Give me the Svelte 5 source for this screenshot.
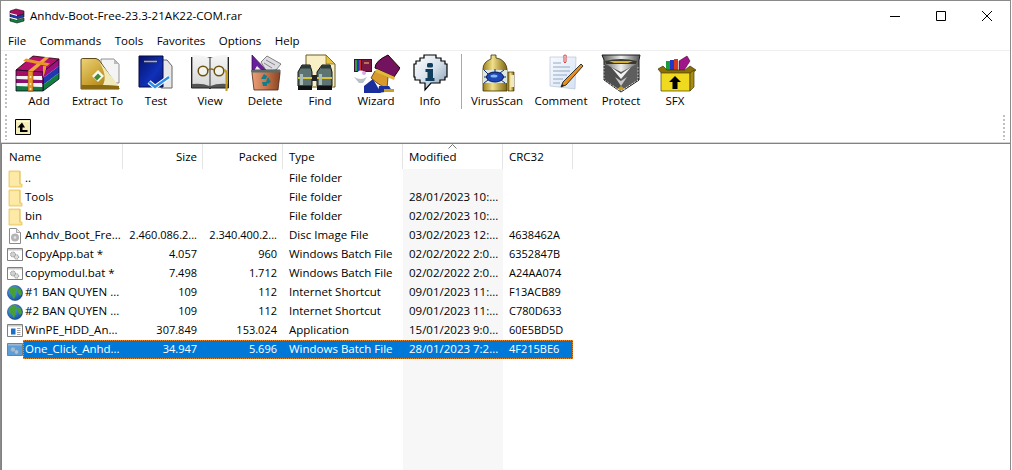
<script>
  const menus = ['File', 'Commands', 'Tools', 'Favorites', 'Options', 'Help'];

  const rows = [
    { icon: 'folder', name: '..', size: '', packed: '', type: 'File folder', modified: '', crc: '' },
    { icon: 'folder', name: 'Tools', size: '', packed: '', type: 'File folder', modified: '28/01/2023 10:...', crc: '' },
    { icon: 'folder', name: 'bin', size: '', packed: '', type: 'File folder', modified: '02/02/2023 10:...', crc: '' },
    { icon: 'disc', name: 'Anhdv_Boot_Fre...', size: '2.460.086.2...', packed: '2.340.400.2...', type: 'Disc Image File', modified: '03/02/2023 12:...', crc: '4638462A' },
    { icon: 'bat', name: 'CopyApp.bat *', size: '4.057', packed: '960', type: 'Windows Batch File', modified: '02/02/2022 2:0...', crc: '6352847B' },
    { icon: 'bat', name: 'copymodul.bat *', size: '7.498', packed: '1.712', type: 'Windows Batch File', modified: '02/02/2022 2:0...', crc: 'A24AA074' },
    { icon: 'globe', name: '#1 BAN QUYEN ...', size: '109', packed: '112', type: 'Internet Shortcut', modified: '09/01/2023 11:...', crc: 'F13ACB89' },
    { icon: 'globe', name: '#2 BAN QUYEN ...', size: '109', packed: '112', type: 'Internet Shortcut', modified: '09/01/2023 11:...', crc: 'C780D633' },
    { icon: 'app', name: 'WinPE_HDD_An...', size: '307.849', packed: '153.024', type: 'Application', modified: '15/01/2023 9:0...', crc: '60E5BD5D' },
    { icon: 'bat', name: 'One_Click_Anhd...', size: '34.947', packed: '5.696', type: 'Windows Batch File', modified: '28/01/2023 7:2...', crc: '4F215BE6', selected: true },
  ];
</script>

{#snippet rarIcon()}
  <svg class="tool-icon" viewBox="0 0 48 40">
    <path d="M1 17 18 3l26 3-16 13z" fill="#b3106f" stroke="#200" stroke-width=".8"/>
    <path d="M28 19 44 6v7L28 25z" fill="#a01080"/>
    <path d="M28 25 44 13v7L28 32z" fill="#2038b0"/>
    <path d="M28 32 44 20v6L28 38z" fill="#108040"/>
    <path d="M28 19 44 6v20L28 38z" fill="none" stroke="#102" stroke-width=".8"/>
    <path d="M1 17l27 2v6L1 23z" fill="#a60e66"/>
    <path d="M2 23h25v3H2z" fill="#f4f4f8"/>
    <path d="M1 26l27 1v4L1 30z" fill="#8c1070"/>
    <path d="M2 30h25v3H2z" fill="#f4f4f8"/>
    <path d="M1 33l27 1v4H1z" fill="#127a3c"/>
    <path d="M1 17l27 2v19H1z" fill="none" stroke="#102" stroke-width=".8"/>
    <path d="M13 18l5 .4V38h-5z" fill="#e8962c" stroke="#6b3c08" stroke-width=".5"/>
    <path d="M13 18 30 4h5L18 18.400z" fill="#f0a53a"/>
    <path d="M8 8l24 5 3-2.500-24-5z" fill="#e8962c"/>
    <path d="M28 13l3 0 0 3-3 9z" fill="#e8962c"/>
    <circle cx="15.500" cy="24" r=".9" fill="#fff2b0"/><circle cx="15.500" cy="31" r=".9" fill="#fff2b0"/><circle cx="15.500" cy="36" r=".9" fill="#fff2b0"/>
  </svg>
{/snippet}

{#snippet extractIcon()}
  <svg class="tool-icon" viewBox="0 0 48 40">
    <path d="M27 6h13l5 5v19H27z" fill="#f4f4f4" stroke="#777" stroke-width=".8"/>
    <path d="M40 6v5h5z" fill="#bbb"/>
    <path d="M7 7q0-1.500 1.500-1.500H22l3 1.500 20 28.500v.5H7z" fill="url(#gold)" stroke="#4d3a06" stroke-width=".9"/>
    <path d="M24 7 45 33 29 32q5-10-5-25z" fill="#f2e9b8"/>
    <path d="M24 17l6 6-6 6-6-6z" fill="#f8f8f0"/>
    <path d="M24 20.500l3 3-4 4-3-3z" fill="#3d8a3a"/>
    <path d="M7 32h22l16 1v3H7z" fill="#8a6a12"/>
  </svg>
{/snippet}

{#snippet testIcon()}
  <svg class="tool-icon" viewBox="0 0 48 40">
    <path d="M29 7h6l5 6v22H29z" fill="#e8e8e8" stroke="#666"/>
    <path d="M7 3h24v31H7z" fill="url(#navy)" stroke="#060a40"/>
    <path d="M12 8.500h13" stroke="#c9b040" stroke-width="1.500"/>
    <path d="M17 29l6 5 14-10" fill="none" stroke="#fff" stroke-width="4.500"/>
    <path d="M17 29l6 5 14-10" fill="none" stroke="#2b8fe8" stroke-width="2.400"/>
  </svg>
{/snippet}

{#snippet viewIcon()}
  <svg class="tool-icon" viewBox="0 0 48 40">
    <path d="M5.500 4v31h18l.5 1 .5-1h18V4" fill="#555" stroke="#222"/>
    <path d="M6.500 2q10-.5 17 3v28q-7-3-17-2z" fill="url(#pagegray)"/>
    <path d="M41.500 2q-10-.5-17 3v28q7-3 17-2z" fill="url(#pagegray)"/>
    <path d="M24 5v28" stroke="#777"/>
    <circle cx="17" cy="18" r="4.800" fill="#f3f3ee" stroke="#6b5210" stroke-width="1.500"/>
    <circle cx="33" cy="18" r="4.800" fill="#f3f3ee" stroke="#6b5210" stroke-width="1.500"/>
    <path d="M22 17q3-2 6 0" fill="none" stroke="#8a6a12" stroke-width="1.400"/>
    <path d="M38 17q2 0 2.500 3V38" fill="none" stroke="#c39a1f" stroke-width="2"/>
  </svg>
{/snippet}

{#snippet deleteIcon()}
  <svg class="tool-icon" viewBox="0 0 48 40">
    <path d="M11 2v17h16z" fill="#6a1f9c" stroke="#2a0a40" stroke-width=".7"/>
    <path d="M16 13l-3 5h8z" fill="#f2f2f2"/>
    <path d="M20 9l6-6 14 8-5 6-9 2z" fill="#dcdce2" stroke="#555" stroke-width=".7"/>
    <path d="M25 7l9 5M23 10l8 5" stroke="#888"/>
    <path d="M11 17h28v3l-2 17H13l-2-17z" fill="url(#clay)" stroke="#4a2412" stroke-width=".8"/>
    <path d="M11 17h28v2.500H11z" fill="#5c6a68"/>
    <path d="M20 26l3-5 3 2-1 3zM27 24l3 5-3 2-2-2zM21 29h5v4h-4z" fill="#0f7f8c"/>
  </svg>
{/snippet}

{#snippet findIcon()}
  <svg class="tool-icon" viewBox="0 0 48 40">
    <path d="M10 2h20l9 9v23H10z" fill="#f8efc6" stroke="#6c5a22"/>
    <path d="M30 2v9h9z" fill="#e6c23c" stroke="#6c5a22" stroke-width=".6"/>
    <path d="M6 12h8l2 7v14H2V19z" fill="#5e7472" stroke="#111"/>
    <path d="M26 12h8l2 7v14H21V19z" fill="#5e7472" stroke="#111"/>
    <path d="M5 12.500h10v3H5zM25 12.500h10v3H25z" fill="#2c3a38"/>
    <path d="M2 24h14v2H2zM21 24h15v2H21z" fill="#d9c23c"/>
    <path d="M2 33h14v4H2zM21 33h15v4H21z" fill="#111"/>
    <path d="M4 21h3v11H4zM23 21h3v11h-3z" fill="#a8bcb8"/>
    <path d="M16 22h5v6h-5z" fill="#222"/>
  </svg>
{/snippet}

{#snippet wizardIcon()}
  <svg class="tool-icon" viewBox="0 0 48 40">
    <path d="M2 6h18v13H2z" fill="#3b1030"/>
    <path d="M3 7h2v11H3z" fill="#2f9a48"/><path d="M5 7h2v11H5z" fill="#2538b8"/><path d="M7 7h2v11H7z" fill="#d02a2a"/>
    <path d="M10 7h9v11h-9z" fill="#781844"/><path d="M12 10h5" stroke="#f0d070"/>
    <circle cx="9" cy="22" r="4.500" fill="#fff"/><circle cx="12" cy="20" r="2" fill="#d8a8e8"/>
    <path d="M2 24q7 4 13 0l-4 6H7z" fill="#b8c0c8"/>
    <path d="M12 33l9-7 8 14H12z" fill="#1a2f9c"/>
    <path d="M23 18l13 6 -1 12-10-6-6-5z" fill="#d89a2c" stroke="#332208" stroke-width=".7"/>
    <path d="M36 2l12 13-6 9-19-9q0-7 13-13z" fill="#73125e" stroke="#200"/>
    <path d="M25 16l18 8-1 3-19-8z" fill="#e2b83a"/>
    <path d="M27 33l10 0 3 5-14 2z" fill="#1a2f9c"/>
    <path d="M32 36h10v3H32z" fill="#c9a020"/>
  </svg>
{/snippet}

{#snippet infoIcon()}
  <svg class="tool-icon" viewBox="0 0 48 40">
    <path d="M14 5h4V2h12v3h5v3h4v3h2v13h-2v3h-5v3h-9l-6 7v-7h-5v-3H9v-3H8V11h2V8h4z" fill="url(#bubble)" stroke="#000" stroke-width="1.200"/>
    <rect x="21" y="10" width="6" height="4.500" rx="1.500" fill="#0f3f5c"/>
    <path d="M19.500 16H27v9h1.500v3h-9v-3h2v-6h-2z" fill="#0f3f5c"/>
  </svg>
{/snippet}

{#snippet virusIcon()}
  <svg class="tool-icon" viewBox="0 0 48 40">
    <path d="M35 19h6v19h-6z" fill="url(#goldbar)" stroke="#3f3206" stroke-width=".7"/>
    <path d="M37.500 22h3.500v12h-3.500z" fill="#f0e8c0"/>
    <path d="M18 2h5v3l4 1q6 3 7 10v22H10V16q0-7 8-10z" fill="url(#goldbar)" stroke="#3f3206" stroke-width=".8"/>
    <path d="M10 17h24v13H10z" fill="#dfe8dc"/>
    <ellipse cx="22" cy="24" rx="8.500" ry="5" fill="#1c48b8" stroke="#081850"/>
    <path d="M15 21l-4-4M15 27l-4 3M22 19v-3M27 20l4-3M28 27l4 3M11 24h3M30 24h3" stroke="#102a80"/>
    <ellipse cx="21" cy="23" rx="3.500" ry="1.600" fill="#8ab8f0"/>
  </svg>
{/snippet}

{#snippet commentIcon()}
  <svg class="tool-icon" viewBox="0 0 48 40">
    <path d="M13 4h26l-1 32-25-3z" fill="url(#paperblue)" stroke="#aebbd0" stroke-width=".6"/>
    <path d="M16 10h8M16 14h17M16 18h17M16 22h14M16 26h10M16 30h7" stroke="#8aa0bc" stroke-width=".9"/>
    <path d="M27 4q-1-2 1-2t1 2v5q-1 2-2 0z" fill="#fff" stroke="#d02a2a" stroke-width=".9"/>
    <path d="M44 11l2 2-17 19-5 2 2-5z" fill="#e8901c" stroke="#222" stroke-width=".9"/>
    <path d="M24 34l1.500-3 1.500 1.500z" fill="#222"/>
  </svg>
{/snippet}

{#snippet protectIcon()}
  <svg class="tool-icon" viewBox="0 0 48 40">
    <path d="M5 2h38l-1 5v20L24 39 7 27V7z" fill="url(#steel)" stroke="#1c1c1c"/>
    <path d="M8 8q16-4 32 0l-1 3H9z" fill="#3b3a2a"/>
    <path d="M12 8h24l-5 2H17z" fill="#d4b030"/>
    <path d="M8 11l16 8v19L8 27z" fill="#4e4e4e"/>
    <path d="M40 11l-16 8v19l16-11z" fill="#5e5e5e"/>
    <path d="M14 14l10 7 10-7-10 12z" fill="#f4f4f4"/>
    <path d="M18 24l6 4 6-4-6 9z" fill="#c8c8c8"/>
    <path d="M24 33l-5 4h10z" fill="#c9a020"/>
    <path d="M7 12v15l17 11 17-11V12" fill="none" stroke="#fff" stroke-width="1" stroke-dasharray="1 2.200"/>
  </svg>
{/snippet}

{#snippet sfxIcon()}
  <svg class="tool-icon" viewBox="0 0 48 40">
    <path d="M14 14l4-9 3 1 2-4 3 1 3-1 3 1 4-2 3 6-3 9z" fill="#fff"/>
    <path d="M15 8h4v11h-4z" fill="#1c9a3c"/><path d="M19 7h4v12h-4z" fill="#2038c8"/><path d="M23 6h4v13h-4z" fill="#d83a20"/>
    <path d="M28 8l8-5 3 5-7 11h-4z" fill="#a0148c" stroke="#300" stroke-width=".5"/>
    <path d="M7 16l5-3 4 4h18l5-4 6 4-5 4H11z" fill="#8a6f08" stroke="#2c2202" stroke-width=".6"/>
    <path d="M10 20h29v18H10z" fill="#f0da20" stroke="#4a3c04" stroke-width=".7"/>
    <path d="M39 20l4-3v17l-4 4z" fill="#a88c10" stroke="#4a3c04" stroke-width=".7"/>
    <path d="M24 23l6 6h-3.500v7h-5v-7H18z" fill="#000"/>
  </svg>
{/snippet}

{#snippet fileIcon(kind)}
  {#if kind === 'folder'}
    <svg class="file-icon" viewBox="0 0 16 18">
      <path d="M2 1h11v13h2v3H2z" fill="#fbe28f" stroke="#e7c25c" stroke-width=".8"/>
      <path d="M3 2.500h9v13H3z" fill="#fdeaa7"/>
      <path d="M13 1v13" stroke="#e7c25c" stroke-width=".8"/>
    </svg>
  {:else if kind === 'disc'}
    <svg class="file-icon" viewBox="0 0 16 18">
      <path d="M2.500 1.500h7l4 4v11h-11z" fill="#fff" stroke="#8a8a8a"/>
      <path d="M9.500 1.500v4h4" fill="#e4e4e4" stroke="#8a8a8a" stroke-width=".7"/>
      <circle cx="8" cy="10.500" r="4" fill="#b4b4b4"/>
      <circle cx="8" cy="10.500" r="1.300" fill="#e8e8e8"/>
    </svg>
  {:else if kind === 'bat'}
    <svg class="file-icon" viewBox="0 0 16 18">
      <path class="frame" d="M.5 2.500h15v12H.5z" fill="#fff" stroke="#7f7f7f"/>
      <path d="M1 3h14v1.500H1z" fill="#c8c8c8"/>
      <circle cx="6" cy="8.500" r="2.500" fill="#d0d0d0" stroke="#8a8a8a" stroke-dasharray="1 .6"/>
      <circle cx="9.500" cy="11" r="2.200" fill="#dcdcdc" stroke="#8a8a8a" stroke-dasharray="1 .6"/>
    </svg>
  {:else if kind === 'globe'}
    <svg class="file-icon" viewBox="0 0 16 18">
      <circle cx="8" cy="9" r="7.600" fill="url(#globe)" stroke="#0e3468" stroke-width=".5"/>
      <path d="M3 4q3-2 6-1l1 3-2 2 1 3-2 4-1-1-1-3-3-2q-.5-3 1-5zM11 4l3 2 1 4-2 2-2-3z" fill="#46a035"/>
    </svg>
  {:else}
    <svg class="file-icon" viewBox="0 0 16 18">
      <path d="M.5 2.500h15v12H.5z" fill="#fff" stroke="#7f7f7f"/>
      <path d="M1 3h14v1.500H1z" fill="#c8c8c8"/>
      <path d="M4 6.500h4.500v6H4z" fill="#1c6fc8"/>
      <path d="M10 6.500h3.500M10 8.500h3.500M10 10.500h3.500M10 12.500h3.500" stroke="#a0a0a0"/>
    </svg>
  {/if}
{/snippet}

<svg class="defs" aria-hidden="true">
  <defs>
    <linearGradient id="gold" x1="0" y1="0" x2="1" y2="1">
      <stop offset="0" stop-color="#ecd37a"/><stop offset=".5" stop-color="#c9a030"/><stop offset="1" stop-color="#8f6c12"/>
    </linearGradient>
    <linearGradient id="goldbar" x1="0" y1="0" x2="1" y2="0">
      <stop offset="0" stop-color="#9c7e18"/><stop offset=".4" stop-color="#f0e08a"/><stop offset="1" stop-color="#80650e"/>
    </linearGradient>
    <linearGradient id="navy" x1="0" y1="0" x2="1" y2="1">
      <stop offset="0" stop-color="#06126a"/><stop offset=".6" stop-color="#1030b8"/><stop offset="1" stop-color="#0a1c80"/>
    </linearGradient>
    <linearGradient id="pagegray" x1="0" y1="0" x2="0" y2="1">
      <stop offset="0" stop-color="#f6f6f6"/><stop offset="1" stop-color="#d8d8d8"/>
    </linearGradient>
    <linearGradient id="clay" x1="0" y1="0" x2="1" y2="0">
      <stop offset="0" stop-color="#e8a07a"/><stop offset=".5" stop-color="#c8744a"/><stop offset="1" stop-color="#8a4424"/>
    </linearGradient>
    <linearGradient id="bubble" x1="0" y1="0" x2="1" y2="1">
      <stop offset="0" stop-color="#ffffff"/><stop offset=".5" stop-color="#d8e2ec"/><stop offset="1" stop-color="#7f96ad"/>
    </linearGradient>
    <linearGradient id="paperblue" x1="0" y1="0" x2="1" y2="1">
      <stop offset="0" stop-color="#f8fbff"/><stop offset="1" stop-color="#d4e2f4"/>
    </linearGradient>
    <linearGradient id="steel" x1="0" y1="0" x2="1" y2="0">
      <stop offset="0" stop-color="#555"/><stop offset=".5" stop-color="#eee"/><stop offset="1" stop-color="#555"/>
    </linearGradient>
    <radialGradient id="globe" cx=".35" cy=".3" r=".8">
      <stop offset="0" stop-color="#5aa8ec"/><stop offset="1" stop-color="#0e4a98"/>
    </radialGradient>
  </defs>
</svg>

<div class="window">
  <header class="titlebar">
    <svg class="title-icon" viewBox="0 0 16 16">
      <path d="M1 3l6-2 8 2v3L8 8 1 6z" fill="#a60e66" stroke="#111" stroke-width=".6"/>
      <path d="M1 6l7 2 7-2v3l-7 2-7-2z" fill="#2038b0" stroke="#111" stroke-width=".6"/>
      <path d="M1 10l7 2 7-2v3l-7 2-7-2z" fill="#108040" stroke="#111" stroke-width=".6"/>
      <path d="M1 6l7 2v-1.200L1 5zM1 10l7 2v-1.200L1 9z" fill="#fff"/>
    </svg>
    <span class="title">Anhdv-Boot-Free-23.3-21AK22-COM.rar</span>
    <div class="controls">
      <button aria-label="Minimize"><svg viewBox="0 0 12 12"><path d="M1 6.500h10" stroke="#000"/></svg></button>
      <button aria-label="Maximize"><svg viewBox="0 0 12 12"><path d="M1.500 1.500h9v9h-9z" fill="none" stroke="#000"/></svg></button>
      <button aria-label="Close"><svg viewBox="0 0 12 12"><path d="M1 1l10 10M11 1 1 11" stroke="#000"/></svg></button>
    </div>
  </header>

  <nav class="menubar">
    {#each menus as m}<span>{m}</span>{/each}
  </nav>

  <div class="toolbar">
    <div class="tool-row main-row">
      <span class="gripper"></span>
      <div class="tools">
        <button class="tool">{@render rarIcon()}<span>Add</span></button>
        <button class="tool extract">{@render extractIcon()}<span>Extract To</span></button>
        <button class="tool">{@render testIcon()}<span>Test</span></button>
        <button class="tool">{@render viewIcon()}<span>View</span></button>
        <button class="tool w56">{@render deleteIcon()}<span>Delete</span></button>
        <button class="tool">{@render findIcon()}<span>Find</span></button>
        <button class="tool w58">{@render wizardIcon()}<span>Wizard</span></button>
        <button class="tool w50">{@render infoIcon()}<span>Info</span></button>
        <span class="tool-sep"></span>
        <button class="tool">{@render virusIcon()}<span>VirusScan</span></button>
        <button class="tool">{@render commentIcon()}<span>Comment</span></button>
        <button class="tool">{@render protectIcon()}<span>Protect</span></button>
        <button class="tool">{@render sfxIcon()}<span>SFX</span></button>
      </div>
    </div>
    <div class="tool-row path-row">
      <span class="gripper"></span>
      <button class="up-btn" aria-label="Up one level">
        <svg viewBox="0 0 16 16">
          <path d="M.5.5h15v15H.5z" fill="#f3eebc" stroke="#000"/>
          <path d="M2 2h12v1H2z" fill="#fff"/>
          <path d="M7 3.500 2.500 8.500H5v4.500h7.500v-2H7.500V8.500H10z" fill="#000"/>
        </svg>
      </button>
      <span class="path-fill"></span>
      <span class="gripper"></span>
    </div>
  </div>

  <section class="list">
    <div class="head">
      <span class="h name">Name</span>
      <span class="h num">Size</span>
      <span class="h num">Packed</span>
      <span class="h">Type</span>
      <span class="h sorted">Modified<svg class="caret" viewBox="0 0 9 5"><path d="M.5 4.500l4-4 4 4" fill="none" stroke="#777"/></svg></span>
      <span class="h">CRC32</span>
    </div>
    <div class="body">
      {#each rows as r}
        <div class="row" class:selected={r.selected}>
          <span class="ico">{@render fileIcon(r.icon)}</span>
          <div class="cells">
            <span class="c">{r.name}</span>
            <span class="c num">{r.size}</span>
            <span class="c num">{r.packed}</span>
            <span class="c">{r.type}</span>
            <span class="c">{r.modified}</span>
            <span class="c crc">{r.crc}</span>
          </div>
        </div>
      {/each}
    </div>
  </section>
</div>

<style>
  :global(body) {
    background: #fff;
  }

  .defs {
    position: absolute;
    width: 0;
    height: 0;
  }

  .window {
    box-sizing: border-box;
    width: 1011px;
    height: 470px;
    border: 1px solid #8a8a8a;
    border-bottom: none;
    background: #fff;
    display: flex;
    flex-direction: column;
    overflow: hidden;
    font-family: "Open Sans", "Noto Sans", sans-serif;
    font-size: 11.500px;
    color: #000;
  }

  button {
    border: none;
    background: none;
    padding: 0;
    font: inherit;
    color: inherit;
  }

  .titlebar {
    flex: 0 0 29px;
    display: flex;
    align-items: center;
    padding-left: 8px;
  }

  .title-icon {
    width: 16px;
    height: 16px;
    margin-right: 5px;
  }

  .title {
    flex: 1;
    font-size: 11.600px;
  }

  .controls {
    display: flex;
    height: 29px;
  }

  .controls button {
    width: 46px;
    display: flex;
    align-items: center;
    justify-content: center;
  }

  .controls svg {
    width: 12px;
    height: 12px;
  }

  .menubar {
    flex: 0 0 20px;
    display: flex;
    align-items: center;
    gap: 13.500px;
    padding-left: 7px;
    border-bottom: 1px solid #efefef;
  }

  .toolbar {
    flex: 0 0 91px;
    display: flex;
    flex-direction: column;
    border-bottom: 1px solid #d4d4d4;
  }

  .tool-row {
    display: flex;
  }

  .main-row {
    height: 61px;
  }

  .path-row {
    flex: 1;
    align-items: center;
    padding-right: 5px;
  }

  .gripper {
    flex: 0 0 2px;
    align-self: stretch;
    margin: 3px 0 2px 4px;
    background: repeating-linear-gradient(#c0c0c0 0 2px, transparent 2px 4px);
  }

  .tools {
    display: flex;
    align-items: flex-start;
    margin-left: 5px;
  }

  .tool {
    flex: none;
    width: 54px;
    box-sizing: border-box;
    padding: 2px 0 0;
    display: flex;
    flex-direction: column;
    align-items: center;
    white-space: nowrap;
  }

  .tool.w50 { width: 50px; }
  .tool.w56 { width: 56px; }
  .tool.w58 { width: 58px; }

  .tool.extract {
    width: 63px;
    font-size: 11px;
  }

  /* the three wide labels on the right of the separator */
  .tool-sep + .tool { width: 62px; }
  .tool-sep + .tool + .tool { width: 66px; }

  .tool span {
    line-height: 14px;
    margin-top: 1px;
  }

  .tool-icon {
    width: 48px;
    height: 40px;
    display: block;
  }

  .tool-sep {
    flex: 0 0 1px;
    height: 55px;
    margin: 3px 4px 0 6px;
    background: #a8a8a8;
  }

  .up-btn {
    width: 16px;
    height: 16px;
    margin-left: 8px;
    display: block;
  }

  .up-btn svg {
    display: block;
  }

  .path-fill {
    flex: 1;
  }

  .list {
    flex: 1;
    min-height: 0;
    border-top: 1px solid #828282;
    border-left: 1px solid #828282;
    display: flex;
    flex-direction: column;
    --cols: 100px 80px 80px 120px 100px 70px;
  }

  .head,
  .cells {
    display: grid;
    grid-template-columns: var(--cols);
  }

  .head {
    height: 25px;
    grid-template-columns: 121px 80px 80px 120px 100px 70px;
  }

  .h {
    box-sizing: border-box;
    padding: 0 5px 0 6px;
    border-right: 1px solid #e5e5e5;
    line-height: 25px;
    position: relative;
  }

  .h.name {
    padding-left: 7px;
  }

  .num {
    text-align: right;
  }

  .caret {
    position: absolute;
    left: 45px;
    top: 0;
    width: 9px;
    height: 5px;
  }

  .body {
    flex: 1;
    background: linear-gradient(#f7f7f7, #f7f7f7) no-repeat 401px 0 / 100px 100%;
  }

  .row {
    display: flex;
    height: 19px;
  }

  .ico {
    flex: 0 0 21px;
    display: flex;
    align-items: center;
    padding-left: 5px;
    box-sizing: border-box;
  }

  .file-icon {
    width: 16px;
    height: 18px;
    display: block;
    flex: none;
  }

  .c {
    box-sizing: border-box;
    padding: 0 6px;
    line-height: 18px;
    white-space: nowrap;
    overflow: hidden;
  }

  .c.num,
  .c.crc {
    font-size: 11px;
  }

  .cells .c:first-child {
    padding-left: 2px;
  }

  .selected .cells {
    background: #0078d7;
    color: #fff;
    outline: 1px dotted #e8842a;
    outline-offset: -1px;
  }

  .selected .ico :global(.frame) {
    fill: #5a9fdc;
  }

  .selected .ico :global(path:not(.frame)),
  .selected .ico :global(circle) {
    opacity: 0.6;
  }
</style>
